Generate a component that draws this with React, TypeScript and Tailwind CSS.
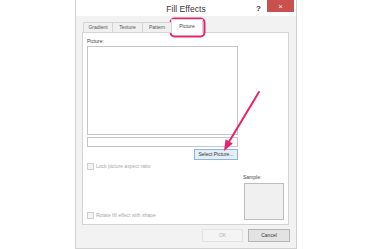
import React from "react";

function Tab({ label, selected, w }: { label: string; selected?: boolean; w: string }) {
  if (selected) {
    return (
      <div
        className={`${w} h-[14px] -ml-px bg-white border border-b-0 border-[#d4d4d4] flex items-center justify-center text-[5px] leading-none text-[#444] relative z-10`}
      >
        {label}
      </div>
    );
  }
  return (
    <div
      className={`${w} h-[11px] -ml-px first:ml-0 bg-[#f0f0f0] border border-[#d4d4d4] flex items-center justify-center text-[5px] leading-none text-[#555]`}
    >
      {label}
    </div>
  );
}

export default function App() {
  return (
    <div
      className="relative w-[375px] h-[249px] bg-white overflow-hidden"
      style={{ fontFamily: '"Liberation Sans", Arial, sans-serif' }}
    >
      <div className="ml-[75px] w-[222px] h-[249px] border-x border-b border-[#d2d2d2] bg-[#f2f2f2] flex flex-col">
        {/* title bar */}
        <div className="h-[16px] bg-white grid grid-cols-[1fr_auto_1fr]">
          <div />
          <div className="pt-[4px] text-[8.6px] leading-[11px] text-[#3a3a3a]">Fill Effects</div>
          <div className="flex justify-end items-start pr-[2px]">
            <span className="mt-[4px] mr-[6px] text-[8px] font-bold leading-[9px] text-[#333]">?</span>
            <div className="w-[27px] h-[12px] bg-[#c9514d] flex items-center justify-center text-white text-[7px] leading-none">
              ×
            </div>
          </div>
        </div>

        {/* body */}
        <div className="pl-[6px] pr-[7px] pt-[3px] flex flex-col">
          {/* tabs */}
          <div className="flex items-end pl-[1px] h-[14px] -mb-px relative z-10">
            <Tab label="Gradient" w="w-[30px]" />
            <Tab label="Texture" w="w-[31px]" />
            <Tab label="Pattern" w="w-[30px]" />
            <Tab label="Picture" w="w-[32px]" selected />
          </div>

          {/* panel */}
          <div className="h-[193px] bg-white border border-[#d4d4d4] pl-[4px] pr-[4px] pt-[4px] pb-[4px] flex flex-col">
            <div className="w-[151px] flex flex-col">
              <div className="text-[5px] leading-[8px] text-[#444]">Picture:</div>
              <div className="mt-[1px] w-[151px] h-[89px] border border-[#c6c6c6] bg-white" />
              <div className="mt-[2px] w-[151px] h-[10px] border border-[#c6c6c6] bg-white" />
              <div className="mt-[2px] self-end w-[44px] h-[11px] bg-[#e3eef9] border border-[#8cb6e0] flex items-center justify-center text-[5px] leading-none text-[#333]">
                Select Picture...
              </div>
            </div>
            <div className="mt-[3px] flex items-center gap-[2px]">
              <div className="w-[7px] h-[7px] border border-[#cfcfcf] bg-[#f3f3f3]" />
              <span className="text-[5px] leading-[7px] text-[#a8a8a8]">Lock picture aspect ratio</span>
            </div>

            <div className="flex-1 flex items-end justify-between">
              <div className="mb-[1px] flex items-center gap-[2px]">
                <div className="w-[7px] h-[7px] border border-[#cfcfcf] bg-[#f3f3f3]" />
                <span className="text-[5px] leading-[7px] text-[#a8a8a8]">Rotate fill effect with shape</span>
              </div>
              <div className="flex flex-col">
                <div className="text-[5px] leading-[8px] text-[#444]">Sample:</div>
                <div className="mt-[2px] ml-[1px] w-[40px] h-[37px] bg-[#f0f0f0] border border-[#bdbdbd]" />
              </div>
            </div>
          </div>

          {/* buttons */}
          <div className="mt-[4px] -mr-[1px] flex justify-end gap-[5px]">
            <div className="w-[41px] h-[13px] bg-[#f4f4f4] border border-[#e2e2e2] flex items-center justify-center text-[5px] leading-none text-[#b5b5b5]">
              OK
            </div>
            <div className="w-[42px] h-[13px] bg-[#e3e3e3] border border-[#b4b4b4] flex items-center justify-center text-[5px] leading-none text-[#333]">
              Cancel
            </div>
          </div>
        </div>
      </div>

      {/* annotations */}
      <svg
        className="absolute inset-0 pointer-events-none"
        width={375}
        height={249}
        viewBox="0 0 375 249"
      >
        <rect x={170.5} y={18.5} width={34} height={18} rx={4} fill="none" stroke="#e2276a" strokeWidth={2} />
        <line x1={259} y1={92} x2={229.2} y2={141.4} stroke="#e8226b" strokeWidth={2} strokeLinecap="round" />
        <polygon points="224,151 232.8,143.6 225.6,139.2" fill="#e8226b" />
      </svg>
    </div>
  );
}
